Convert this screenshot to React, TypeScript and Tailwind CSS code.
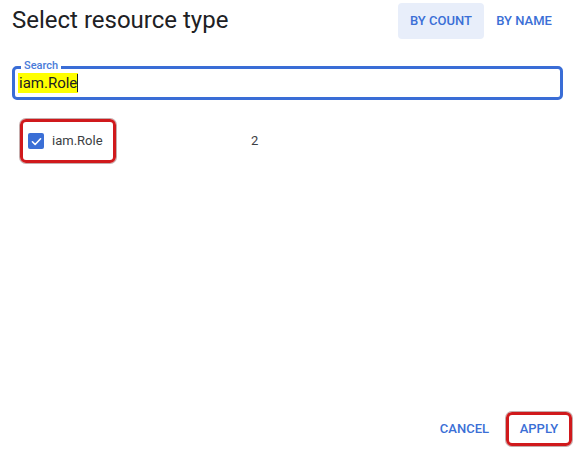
import { useState } from "react";

export default function App() {
  const [query] = useState("iam.Role");
  const [sortBy, setSortBy] = useState<"count" | "name">("count");

  return (
    <div className="flex h-[452px] w-[575px] flex-col bg-white font-['Roboto',sans-serif] text-[#202124]">
      {/* Header */}
      <div className="flex items-start justify-between pl-3 pr-[11px] pt-[3px]">
        <h1 className="mt-[2px] text-[24px] leading-[30px] font-normal">Select resource type</h1>
        <div className="flex gap-0">
          <button
            onClick={() => setSortBy("count")}
            className={`h-9 w-[86px] rounded-[4px] text-[13px] font-medium text-[#3b6fd6] ${sortBy === "count" ? "bg-[#e8eefa]" : ""}`}
          >
            BY COUNT
          </button>
          <button
            onClick={() => setSortBy("name")}
            className={`h-9 w-[80px] rounded-[4px] text-[13px] font-medium text-[#3b6fd6] ${sortBy === "name" ? "bg-[#e8eefa]" : ""}`}
          >
            BY NAME
          </button>
        </div>
      </div>

      {/* Search */}
      <div className="relative mx-3 mt-[27px] h-[34px] rounded-[5px] border-[3px] border-[#3a6dd6]">
        <span className="absolute -top-[10px] left-[6px] bg-white px-[3px] text-[11px] leading-[14px] font-medium text-[#4a7bd9]">
          Search
        </span>
        <div className="flex h-full items-center pl-[3px]">
          <span className="bg-[#ffff00] px-[1px] text-[15px] leading-[20px] text-[#202124]">{query}</span>
          <span className="-ml-[1px] h-[18px] w-px bg-[#202124]" />
        </div>
      </div>

      {/* Results */}
      <div className="mt-[19px] flex items-center pl-5">
        <div className="flex h-[44px] w-[96px] items-center gap-2 rounded-[6px] border-[3px] border-[#d0191c] pl-[5px] shadow-[0_0_0_1px_rgba(90,20,20,0.35)]">
          <span className="flex h-4 w-4 items-center justify-center rounded-[2px] bg-[#3b6fd6]">
            <svg width="13" height="13" viewBox="0 0 24 24" fill="none" stroke="white" strokeWidth="3" strokeLinecap="round" strokeLinejoin="round">
              <path d="M4.5 12.5l5 5L19.5 7" />
            </svg>
          </span>
          <span className="text-[13px] text-[#3c4043]">iam.Role</span>
        </div>
        <span className="ml-[135px] text-[13px] text-[#3c4043]">2</span>
      </div>

      {/* Footer */}
      <div className="mt-auto mb-[6px] flex items-center justify-end gap-[17px] pr-[3px]">
        <button className="text-[13px] font-medium text-[#3b6fd6]">CANCEL</button>
        <button className="flex h-[34px] w-[66px] items-center justify-center rounded-[6px] border-[3px] border-[#d0191c] text-[13px] font-medium text-[#3b6fd6] shadow-[0_0_0_1px_rgba(90,20,20,0.35)]">
          APPLY
        </button>
      </div>
    </div>
  );
}
